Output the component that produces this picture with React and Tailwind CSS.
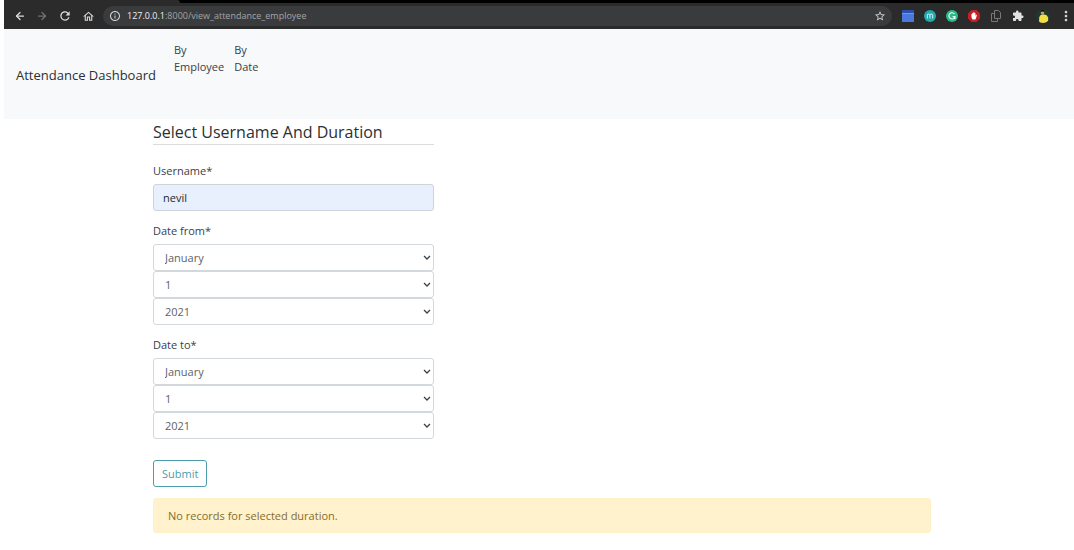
import { ArrowLeft, ArrowRight } from "lucide-react";
import { MdRefresh, MdOutlineHome, MdInfoOutline, MdStarBorder, MdExtension, MdMoreVert } from "react-icons/md";

const MONTHS = ["January", "February", "March", "April", "May", "June", "July", "August", "September", "October", "November", "December"];
const DAYS = Array.from({ length: 31 }, (_, i) => String(i + 1));
const YEARS = Array.from({ length: 10 }, (_, i) => String(2021 + i));

function Extensions() {
  return (
    <div className="flex items-center gap-[10px]">
      <button aria-label="Window extension">
        <svg viewBox="0 0 12 12" className="size-3">
          <rect width="12" height="12" fill="#4a78dc" />
          <rect width="12" height="3" fill="#2c4fae" />
          <path d="M0 3.5h12" stroke="#7fa2ec" strokeWidth="0.8" />
        </svg>
      </button>
      <button aria-label="Meeting extension">
        <svg viewBox="0 0 12 12" className="size-3">
          <circle cx="6" cy="6" r="6" fill="#22a9ae" />
          <path d="M3.3 8.5V5.2q0-1.2 1.3-1.2T6 5.2v3.3M6 5.2Q6 4 7.3 4t1.4 1.2v3.3" fill="none" stroke="#d8f6f6" />
        </svg>
      </button>
      <button aria-label="Grammar extension">
        <svg viewBox="0 0 12 12" className="size-3">
          <circle cx="6" cy="6" r="6" fill="#2bb88b" />
          <path d="M8.5 4A3.1 3.1 0 1 0 9 6.6H6.6M9 6.4V9" fill="none" stroke="#e6fff6" strokeWidth="1.1" />
        </svg>
      </button>
      <button aria-label="Blocker extension">
        <svg viewBox="0 0 12 12" className="size-3">
          <path d="M3.5 0h5L12 3.5v5L8.5 12h-5L0 8.5v-5z" fill="#c32025" />
          <path d="M3.4 6V4.2q.5-.6.9 0V3q.5-.6 1 0v-.5q.6-.6 1.1 0V3q.6-.6 1 0v2.8l.8-1q.7-.2.7.4L7.8 8.7 7.3 9.6H4.7Q3.4 8.5 3.400 6z" fill="#fff" />
        </svg>
      </button>
      <button aria-label="Copy extension">
        <svg viewBox="0 0 12 12" className="size-3" fill="none" stroke="#77787a">
          <path d="M4.5 .5h4l2 2v6h-6z" />
          <path d="M4.5 3.5h-3v8h6v-3" />
        </svg>
      </button>
      <button aria-label="Extensions" className="text-[#e2e3e5]">
        <MdExtension className="size-3" />
      </button>
      <button aria-label="Profile" className="mx-0.5">
        <svg viewBox="0 0 14 14" className="size-3.5">
          <defs>
            <clipPath id="avatar"><circle cx="7" cy="7" r="7" /></clipPath>
          </defs>
          <g clipPath="url(#avatar)">
            <rect width="14" height="14" fill="#1f3a2c" />
            <path d="M3 14l.3-6q.7-2 3-2.400h2q3 .2 3.700 2.700l.5 5.700z" fill="#f2df45" />
            <ellipse cx="6.500" cy="3.600" rx="1.700" ry="2.300" fill="#c99a70" />
            <path d="M4.800 3Q4.500.7 6.500.7T8.200 3q-1.700-1-3.400 0z" fill="#17120f" />
          </g>
        </svg>
      </button>
      <button aria-label="Menu" className="-mx-1 text-[#d5d6d8]">
        <MdMoreVert className="size-4" />
      </button>
    </div>
  );
}

function BrowserBar() {
  return (
    <header className="bg-black">
      <div className="h-[3px] w-[176px] rounded-tr bg-[#2b2b2b]" />
      <div className="flex h-[26px] items-center bg-[#2b2b2b] pr-1">
        <div className="flex items-center gap-[10px] pr-2 pl-[10px] text-[#dcdddf]">
          <button aria-label="Back"><ArrowLeft className="size-3" strokeWidth={2.5} /></button>
          <button aria-label="Forward" className="text-[#727375]"><ArrowRight className="size-3" strokeWidth={2.5} /></button>
          <button aria-label="Reload"><MdRefresh className="size-[14px]" /></button>
          <button aria-label="Home"><MdOutlineHome className="size-[13px]" /></button>
        </div>
        <div className="mr-[10px] flex h-5 min-w-0 flex-1 items-center rounded-full bg-[#3a3b3d] pr-1.5 pl-1.5">
          <MdInfoOutline className="mr-1.5 size-3 shrink-0 text-[#d5d6d8]" />
          <p className="flex-1 truncate text-[9px] leading-4 text-[#a3a5a8]">
            <span className="text-[#eeeff0]">127.0.0.1</span>:8000/view_attendance_employee
          </p>
          <button aria-label="Bookmark" className="text-[#d5d6d8]"><MdStarBorder className="size-3" /></button>
        </div>
        <Extensions />
      </div>
    </header>
  );
}

function SelectField({ label, options }) {
  return (
    <div className="relative">
      <select
        aria-label={label}
        className="block h-[27px] w-full appearance-none rounded-[3px] border border-[#d3d8dc] bg-white pr-6 pl-[11px] text-[11px] leading-4 text-[#5b636a]"
      >
        {options.map((option) => <option key={option}>{option}</option>)}
      </select>
      <svg viewBox="0 0 8 6" className="pointer-events-none absolute top-[11px] right-[3px] h-1.5 w-2" fill="none" stroke="#3c4146" strokeWidth="1.3">
        <path d="M1 1l3 3 3-3" />
      </svg>
    </div>
  );
}

function DateFields({ label }) {
  return (
    <fieldset className="mt-3">
      <legend className="mb-[5px] leading-4">{label}*</legend>
      <SelectField label={`${label} month`} options={MONTHS} />
      <SelectField label={`${label} day`} options={DAYS} />
      <SelectField label={`${label} year`} options={YEARS} />
    </fieldset>
  );
}

export default function App() {
  return (
    <div className="min-h-screen bg-white pl-1 font-['Open_Sans','Noto_Sans',sans-serif] text-[11px] text-[#3a4046]">
      <BrowserBar />
      <nav className="flex h-[90px] items-start bg-[#f8f9fa] pl-3">
        <a href="#" className="mt-9 text-[13px] leading-5 whitespace-nowrap text-[#2b3034]">Attendance Dashboard</a>
        <ul className="mt-3 ml-[18px] flex gap-[10px] leading-[17px]">
          <li><a href="#" className="block">By<br />Employee</a></li>
          <li><a href="#" className="block">By<br />Date</a></li>
        </ul>
      </nav>
      <main className="pr-[143px] pl-[149px]">
        <form className="max-w-[281px]" onSubmit={(e) => e.preventDefault()}>
          <h1 className="mb-[18px] border-b border-[#d9dde0] pt-px text-[16px] leading-6 whitespace-nowrap text-[#2b3034]">Select Username And Duration</h1>
          <label htmlFor="username" className="mb-[5px] block leading-4">Username*</label>
          <input id="username" type="text" defaultValue="nevil" className="block h-[27px] w-full rounded-[3px] border border-[#ced4da] bg-[#e8f0fe] px-[9px] leading-4 text-[#24282c]" />
          <DateFields label="Date from" />
          <DateFields label="Date to" />
          <button type="submit" className="mt-[21px] block h-[27px] rounded-[3px] border border-[#4b9dab] px-2 leading-4 text-[#4b9dab]">Submit</button>
        </form>
        <div role="alert" className="mt-[11px] rounded-[3px] border border-[#fff0c8] bg-[#fff2cd] px-[14px] py-2 leading-[17px] text-[#856d2b]">
          No records for selected duration.
        </div>
      </main>
    </div>
  );
}
